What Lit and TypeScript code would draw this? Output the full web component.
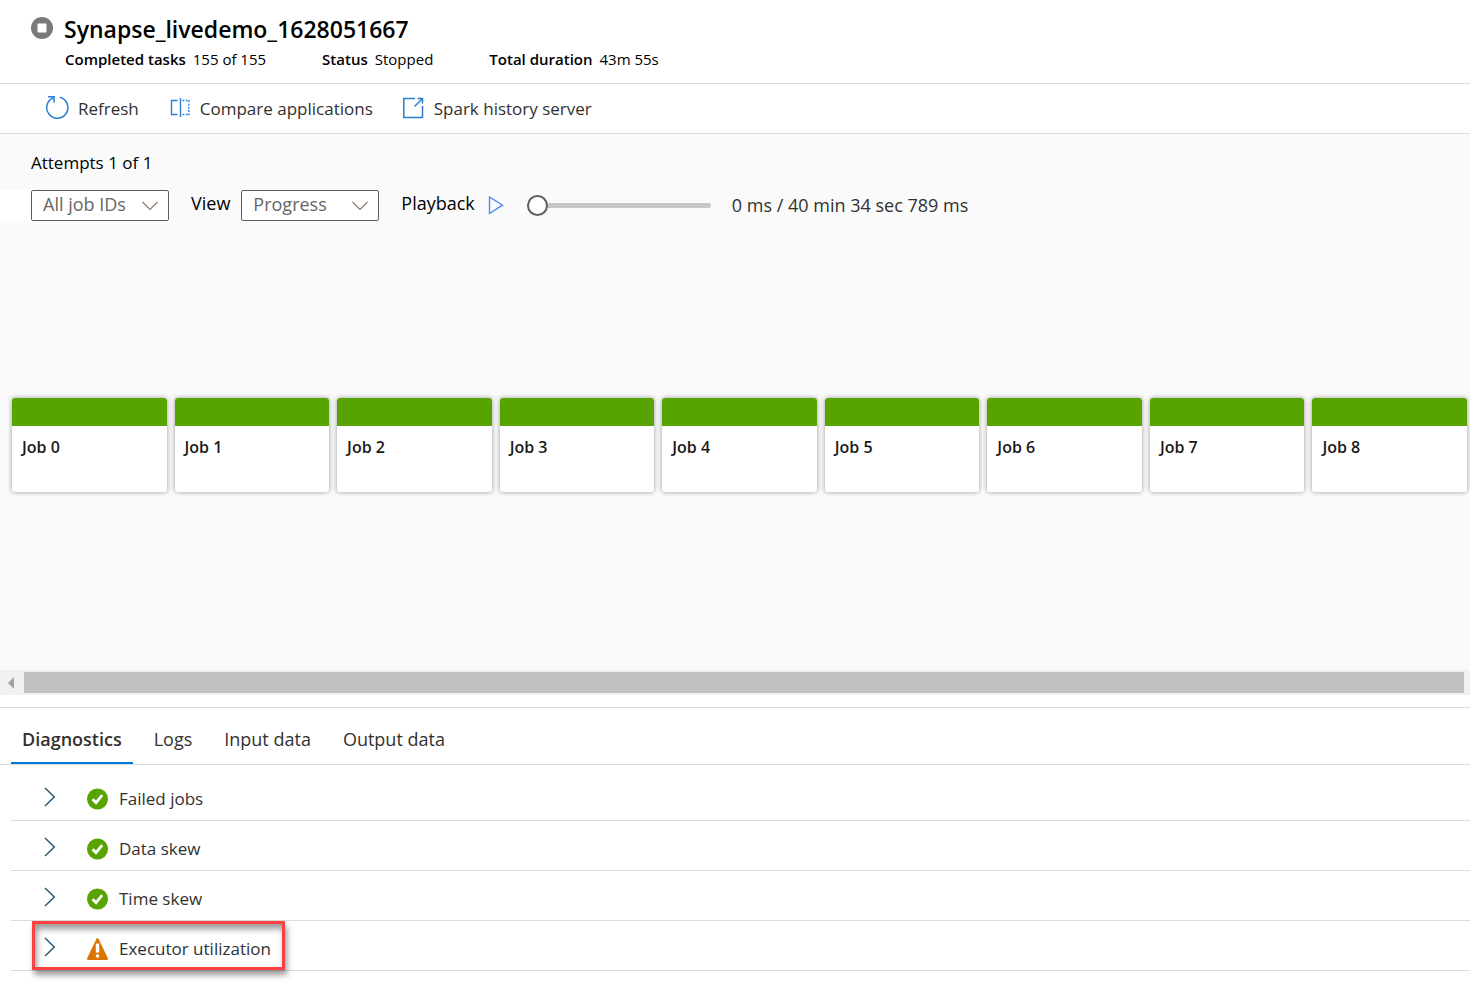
import { LitElement, html, css, svg } from "lit";
import { customElement, property, state } from "lit/decorators.js";
import { classMap } from "lit/directives/class-map.js";

const checkIcon = svg`<svg class="status" width="22" height="22" viewBox="0 0 22 22" aria-hidden="true">
  <circle cx="10.500" cy="11" r="10.500" fill="#57a300"/>
  <path d="M5.600 11.200l3.400 3.400 6.200-7.400" fill="none" stroke="#fff" stroke-width="2.800"/>
</svg>`;

const warningIcon = svg`<svg class="status" width="22" height="22" viewBox="0 0 22 22" aria-hidden="true">
  <path d="M9.400 0.9Q10.500 -0.7 11.600 0.9L20.900 20.200Q21.300 22 19.500 22H1.500Q-0.300 22 0.100 20.200Z" fill="#db7500"/>
  <path d="M8.800 5.600h3.400v9h-3.400z" fill="#fff"/>
  <circle cx="10.500" cy="18" r="1.800" fill="#fff"/>
</svg>`;

@customElement("job-card")
export class JobCard extends LitElement {
  @property() name = "";

  static styles = css`
    :host {
      display: block;
      height: 94px;
      background: #fff;
      border-radius: 3px;
      overflow: hidden;
      box-shadow: 0 0 5px rgba(0, 0, 0, 0.4);
    }
    .bar {
      height: 28px;
      background: #57a300;
    }
    .name {
      padding: 9px 10px;
      font-size: 16px;
      line-height: 24px;
      font-weight: 600;
      color: #1b1a19;
    }
  `;

  render() {
    return html`<div class="bar"></div><div class="name">${this.name}</div>`;
  }
}

@customElement("app-root")
export class AppRoot extends LitElement {
  @state() private tab = "Diagnostics";
  @state() private elapsed = 0;

  private jobs = Array.from({ length: 9 }, (_, i) => `Job ${i}`);
  private tabs = ["Diagnostics", "Logs", "Input data", "Output data"];
  private checks = [
    { label: "Failed jobs", ok: true },
    { label: "Data skew", ok: true },
    { label: "Time skew", ok: true },
    { label: "Executor utilization", ok: false },
  ];

  static styles = css`
    :host {
      display: flex;
      flex-direction: column;
      min-height: 100vh;
      box-sizing: border-box;
      padding-bottom: 20px;
      background: #fff;
      color: #000;
      font-family: "Open Sans", "Noto Sans", sans-serif;
      font-size: 17px;
      line-height: 24px;
    }
    * {
      box-sizing: border-box;
    }
    button,
    select {
      font: inherit;
      color: inherit;
      background: none;
      border: 0;
      padding: 0;
      margin: 0;
    }
    svg {
      display: block;
      flex: none;
    }
    .header {
      padding: 12px 31px;
      border-bottom: 1px solid #dcdcdc;
    }
    .title {
      display: flex;
      align-items: center;
      gap: 11px;
    }
    h1 {
      margin: 0;
      font-size: 23px;
      line-height: 35px;
      font-weight: 600;
    }
    .facts {
      display: flex;
      gap: 56px;
      margin: 0;
      padding-left: 34px;
      font-size: 15px;
    }
    .fact {
      display: flex;
      gap: 7px;
    }
    dt {
      font-weight: 600;
    }
    dd {
      margin: 0;
    }
    .toolbar {
      display: flex;
      gap: 30px;
      padding: 0 45px;
      border-bottom: 1px solid #dcdcdc;
      color: #323130;
    }
    .toolbar button,
    .toolbar a {
      display: flex;
      align-items: center;
      gap: 9px;
      height: 49px;
      color: inherit;
      text-decoration: none;
    }
    .canvas {
      flex: 1;
      display: flex;
      flex-direction: column;
      background: #fafafa;
    }
    .attempts {
      padding: 17px 31px 15px;
    }
    .controls {
      display: flex;
      align-items: center;
      height: 31px;
      font-size: 18px;
    }
    .lead {
      width: 31px;
      height: 31px;
      background: #fff;
    }
    .picker {
      position: relative;
      width: 138px;
    }
    .picker select {
      display: block;
      appearance: none;
      width: 100%;
      height: 31px;
      padding: 0 11px 4px;
      background: #fff;
      border: 1px solid #605e5c;
      border-radius: 2px;
      color: #666;
    }
    .picker svg {
      position: absolute;
      right: 10px;
      top: 10px;
      pointer-events: none;
    }
    .view,
    .playback {
      padding-bottom: 5px;
    }
    .view {
      margin: 0 11px 0 22px;
    }
    .playback {
      margin: 0 13px 0 22px;
    }
    .slider {
      appearance: none;
      width: 184px;
      height: 22px;
      margin: 0 21px 0 23px;
      background: none;
    }
    .slider::-webkit-slider-runnable-track {
      height: 5px;
      border-radius: 3px;
      background: #c8c6c4;
    }
    .slider::-webkit-slider-thumb {
      appearance: none;
      box-sizing: border-box;
      width: 21px;
      height: 21px;
      margin-top: -8px;
      border: 2px solid #605e5c;
      border-radius: 50%;
      background: #fff;
    }
    .time {
      padding-bottom: 2px;
      color: #323130;
    }
    .graph {
      flex: 1;
      display: grid;
      grid-template-columns: repeat(9, 1fr);
      gap: 8px;
      align-items: center;
      min-height: 200px;
      padding: 0 3px 2px 12px;
    }
    .scrollbar {
      display: flex;
      align-items: center;
      height: 25px;
      padding-right: 6px;
      background: #f1f1f1;
    }
    .scrollbar button {
      width: 24px;
      padding-left: 8px;
    }
    .thumb {
      flex: 1;
      height: 21px;
      background: #c1c1c1;
    }
    .tabs {
      display: flex;
      margin-top: 12px;
      padding-left: 11px;
      border-top: 1px solid #dcdcdc;
      border-bottom: 1px solid #dcdcdc;
      color: #323130;
      font-size: 18px;
    }
    .tabs button {
      height: 56px;
      padding: 8px 11px 0;
      margin-right: 10px;
      border-bottom: 2px solid transparent;
    }
    .tabs .active {
      font-weight: 600;
      border-bottom-color: #0078d4;
    }
    .checks {
      list-style: none;
      margin: 6px 0 0 11px;
      padding: 0;
      color: #323130;
    }
    .check {
      position: relative;
      border-bottom: 1px solid #dcdcdc;
    }
    .check button {
      display: flex;
      align-items: center;
      width: 100%;
      height: 49px;
      padding: 6px 0 0 33px;
      text-align: left;
    }
    .status {
      margin: 0 10px 0 31px;
    }
    .focus {
      position: absolute;
      left: 21px;
      top: 0;
      width: 253px;
      height: 49px;
      border: 3px solid #fb4142;
      box-shadow: 2px 5px 6px rgba(0, 0, 0, 0.4), inset 2px 5px 6px rgba(0, 0, 0, 0.4);
      pointer-events: none;
    }
  `;

  private picker(id: string, label: string) {
    return html`<div class="picker">
      <select id=${id} aria-label=${label}><option>${label}</option></select>
      <svg width="18" height="12" viewBox="0 0 18 12" aria-hidden="true">
        <path d="M1.500 2l7.500 7.500L16.500 2" fill="none" stroke="#8a7b70" stroke-width="1.200"/>
      </svg>
    </div>`;
  }

  private fact(name: string, value: string) {
    return html`<div class="fact"><dt>${name}</dt><dd>${value}</dd></div>`;
  }

  render() {
    return html`
      <header class="header">
        <div class="title">
          <svg width="22" height="26" viewBox="0 0 22 26" aria-hidden="true">
            <circle cx="11" cy="11" r="11" fill="#7a7a7a"/>
            <rect x="6.500" y="6.500" width="9" height="9" rx="1" fill="#fff"/>
          </svg>
          <h1>Synapse_livedemo_1628051667</h1>
        </div>
        <dl class="facts">
          ${this.fact("Completed tasks", "155 of 155")}
          ${this.fact("Status", "Stopped")}
          ${this.fact("Total duration", "43m 55s")}
        </dl>
      </header>

      <nav class="toolbar">
        <button>
          <svg width="24" height="28" viewBox="0 0 24 28" fill="none" stroke="#2b7cd3" stroke-width="1.500" aria-hidden="true">
            <path d="M14.800 2.300A10.600 10.600 0 1 1 8.500 2.700"/>
            <path d="M3 1.700H9.100V7.500"/>
          </svg>
          Refresh
        </button>
        <button>
          <svg width="22" height="24" viewBox="0 0 22 24" fill="none" stroke="#2b7cd3" stroke-width="1.400" aria-hidden="true">
            <path d="M8.500 3.500H2.500V17.500H8.500"/>
            <path d="M11.500 1V20"/>
            <path d="M13.500 3.500H20.500M13.500 17.500H20.500M19.800 3.500V18" stroke-dasharray="1.800 1.400"/>
          </svg>
          Compare applications
        </button>
        <a href="#history">
          <svg width="22" height="26" viewBox="0 0 22 26" fill="none" stroke="#2b7cd3" stroke-width="1.500" aria-hidden="true">
            <path d="M12 2.500H0.800V21.500H19.500V10"/>
            <path d="M14.500 2.500H19.500V7.500M19.500 2.500L11.500 10.500"/>
          </svg>
          Spark history server
        </a>
      </nav>

      <section class="canvas">
        <div class="attempts">Attempts 1 of 1</div>
        <div class="controls">
          <div class="lead"></div>
          ${this.picker("job", "All job IDs")}
          <label class="view" for="view">View</label>
          ${this.picker("view", "Progress")}
          <label class="playback" for="playback">Playback</label>
          <button aria-label="Play">
            <svg width="16" height="20" viewBox="0 0 16 20" aria-hidden="true">
              <path d="M1.500 1V17.500L14.500 9.200Z" fill="none" stroke="#4f8df0" stroke-width="1.400"/>
            </svg>
          </button>
          <input class="slider" id="playback" type="range" min="0" max="2434789"
            .value=${String(this.elapsed)}
            @input=${(e: Event) => (this.elapsed = Number((e.target as HTMLInputElement).value))}>
          <span class="time">${this.elapsed} ms / 40 min 34 sec 789 ms</span>
        </div>
        <div class="graph">
          ${this.jobs.map((name) => html`<job-card .name=${name}></job-card>`)}
        </div>
        <div class="scrollbar">
          <button aria-label="Scroll left">
            <svg width="6" height="12" viewBox="0 0 6 12" aria-hidden="true">
              <path d="M6 0V12L0 6Z" fill="#a3a3a3"/>
            </svg>
          </button>
          <div class="thumb"></div>
        </div>
      </section>

      <div class="tabs" role="tablist">
        ${this.tabs.map((name) => html`<button role="tab"
          class=${classMap({ active: name === this.tab })}
          aria-selected=${name === this.tab ? "true" : "false"}
          @click=${() => (this.tab = name)}>${name}</button>`)}
      </div>

      <ul class="checks">
        ${this.checks.map((c) => html`<li class="check">
          <button>
            <svg width="12" height="24" viewBox="0 0 12 24" aria-hidden="true">
              <path d="M1 1L10.300 10L1 19" fill="none" stroke="#1f5673" stroke-width="1.400"/>
            </svg>
            ${c.ok ? checkIcon : warningIcon}
            ${c.label}
          </button>
          ${c.ok ? "" : html`<div class="focus"></div>`}
        </li>`)}
      </ul>
    `;
  }
}
